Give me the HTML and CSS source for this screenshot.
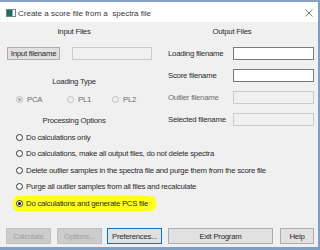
FILE: index.html
```html
<!DOCTYPE html>
<html>
<head>
<meta charset="utf-8">
<link rel="stylesheet" href="styles.css">
</head>
<body>
<div class="window">
  <div class="titlebar">
    <svg class="app-icon" width="10" height="8" viewBox="0 0 10 8">
      <rect x="0.5" y="0.5" width="9" height="7" fill="#ffffff" stroke="#6a8a8a"/>
      <rect x="1" y="1" width="5" height="6" fill="#1f6f5f"/>
      <rect x="6" y="1" width="1" height="6" fill="#9ab"/>
    </svg>
    <span class="title">Create a score file from a&nbsp; spectra file</span>
    <svg class="close" width="8" height="8" viewBox="0 0 8 8">
      <path d="M0.5 0.5 L7.5 7.5 M7.5 0.5 L0.5 7.5" stroke="#5a5a5a" stroke-width="0.8" fill="none"/>
    </svg>
  </div>
  <div class="content">
    <div class="top">
      <div class="col left">
        <div class="heading">Input Files</div>
        <div class="input-row">
          <div class="btn input-btn">Input filename</div>
          <div class="field disabled input-field"></div>
        </div>
        <div class="heading loading-type">Loading Type</div>
        <div class="radio-row">
          <div class="radio-item pca"><span class="radio disabled checked"></span><span class="muted">PCA</span></div>
          <div class="radio-item pl1"><span class="radio disabled"></span><span class="muted">PL1</span></div>
          <div class="radio-item"><span class="radio disabled"></span><span class="muted">PL2</span></div>
        </div>
        <div class="heading proc">Processing Options</div>
      </div>
      <div class="col right">
        <div class="heading out-heading">Output Files</div>
        <div class="field-row"><span class="label">Loading filename</span><div class="field"></div></div>
        <div class="field-row"><span class="label">Score filename</span><div class="field"></div></div>
        <div class="field-row"><span class="label muted">Outlier filename</span><div class="field disabled"></div></div>
        <div class="field-row"><span class="label">Selected filename</span><div class="field disabled"></div></div>
      </div>
    </div>
    <div class="options">
      <div class="option"><span class="radio"></span><span>Do calculations only</span></div>
      <div class="option"><span class="radio"></span><span>Do calculations, make all output files, do not delete spectra</span></div>
      <div class="option"><span class="radio"></span><span>Delete outlier samples in the spectra file and purge them from the score file</span></div>
      <div class="option"><span class="radio"></span><span>Purge all outlier samples from all files and recalculate</span></div>
      <div class="option"><span class="highlight"><span class="radio checked"></span><span>Do calculations and generate PCS file</span></span></div>
    </div>
    <div class="buttons">
      <div class="btn disabled b-calc">Calculate</div>
      <div class="btn disabled b-opt">Options...</div>
      <div class="btn focused b-pref">Preferences...</div>
      <div class="btn b-exit">Exit Program</div>
      <div class="btn b-help">Help</div>
    </div>
  </div>
</div>
</body>
</html>
```
FILE: styles.css
```css
* { box-sizing: border-box; }
html, body { margin: 0; padding: 0; background: #ffffff; }
body {
  font-family: "Liberation Sans", Arial, sans-serif;
  font-size: 7.8px;
  letter-spacing: -0.25px;
  color: #2b2b2b;
}
.window {
  width: 320px;
  height: 250px;
  border-top: 2px solid #8aa2c2;
  border-right: 2px solid #7e9fc8;
  border-bottom: 3px solid #7e9fc8;
  display: flex;
  flex-direction: column;
  overflow: hidden;
}
.titlebar {
  height: 20px;
  background: #ffffff;
  display: flex;
  align-items: center;
  padding-left: 6px;
  padding-top: 2px;
}
.app-icon { flex: none; }
.title {
  font-family: "Liberation Sans", Arial, sans-serif;
  font-size: 8px;
  letter-spacing: 0;
  color: #3a3a3a;
  margin-left: 2px;
}
.close { margin-left: auto; margin-right: 5px; }
.content {
  flex: 1;
  background: #f0f0f0;
  display: flex;
  flex-direction: column;
}
.top { display: flex; }
.col { display: flex; flex-direction: column; }
.left { width: 160px; }
.right { width: 158px; }
.heading {
  height: 10px;
  line-height: 10px;
  text-align: center;
  margin-top: 5px;
  width: 148px;
}
.out-heading { width: 144px; }
.input-row { display: flex; margin-top: 10px; height: 13px; }
.btn {
  background: #e1e1e1;
  border: 1px solid #adadad;
  display: flex;
  align-items: center;
  justify-content: center;
  white-space: nowrap;
}
.input-btn { margin-left: 7px; width: 53px; height: 13px; }
.field {
  height: 13px;
  width: 81px;
  background: #ffffff;
  border: 1px solid #7a7a7a;
}
.field.disabled { background: #f0f0f0; border-color: #cccccc; }
.input-field { margin-left: 12px; width: 80px; }
.loading-type { margin-top: 17px; }
.radio-row { display: flex; height: 12px; margin-top: 6px; padding-left: 16px; align-items: center; }
.radio-item { display: flex; align-items: center; gap: 4px; }
.pca { width: 51px; }
.pl1 { width: 45px; }
.proc { margin-top: 11px; }
.muted { color: #6d6d6d; }
.radio {
  width: 7px;
  height: 7px;
  border-radius: 50%;
  border: 1px solid #333333;
  background: #ffffff;
  flex: none;
  display: inline-flex;
  align-items: center;
  justify-content: center;
}
.radio.disabled { border-color: #bcbcbc; background: #f0f0f0; }
.radio.checked::after {
  content: "";
  width: 3px;
  height: 3px;
  border-radius: 50%;
  background: #111111;
}
.radio.disabled.checked::after { background: #a8a8a8; }
.field-row { display: flex; align-items: center; height: 13px; margin-top: 9px; padding-left: 8px; }
.out-heading + .field-row { margin-top: 10px; }
.label { width: 65px; white-space: nowrap; }
.options { margin-top: 3px; padding-left: 16px; display: flex; flex-direction: column; }
.option { height: 16.5px; display: flex; align-items: center; gap: 3px; white-space: nowrap; }
.highlight {
  display: inline-flex;
  align-items: center;
  gap: 3px;
  background: #ffff1e;
  margin-left: -3px;
  padding: 0 8px 0 3px;
  height: 15px;
  border-radius: 6px;
  box-shadow: 0 0 2px #ffff40;
}
.buttons {
  margin-top: auto;
  margin-bottom: 3px;
  display: flex;
  padding-left: 6px;
  height: 16px;
}
.buttons .btn { height: 16px; }
.btn.disabled { color: #a0a0a0; background: #cccccc; border-color: #bfbfbf; }
.btn.focused { border-color: #0078d7; }
.b-calc { width: 45px; }
.b-opt { width: 45px; margin-left: 6px; }
.b-pref { width: 55px; margin-left: 5px; }
.b-exit { width: 105px; margin-left: 6px; }
.b-help { width: 34px; margin-left: 7px; }
```
